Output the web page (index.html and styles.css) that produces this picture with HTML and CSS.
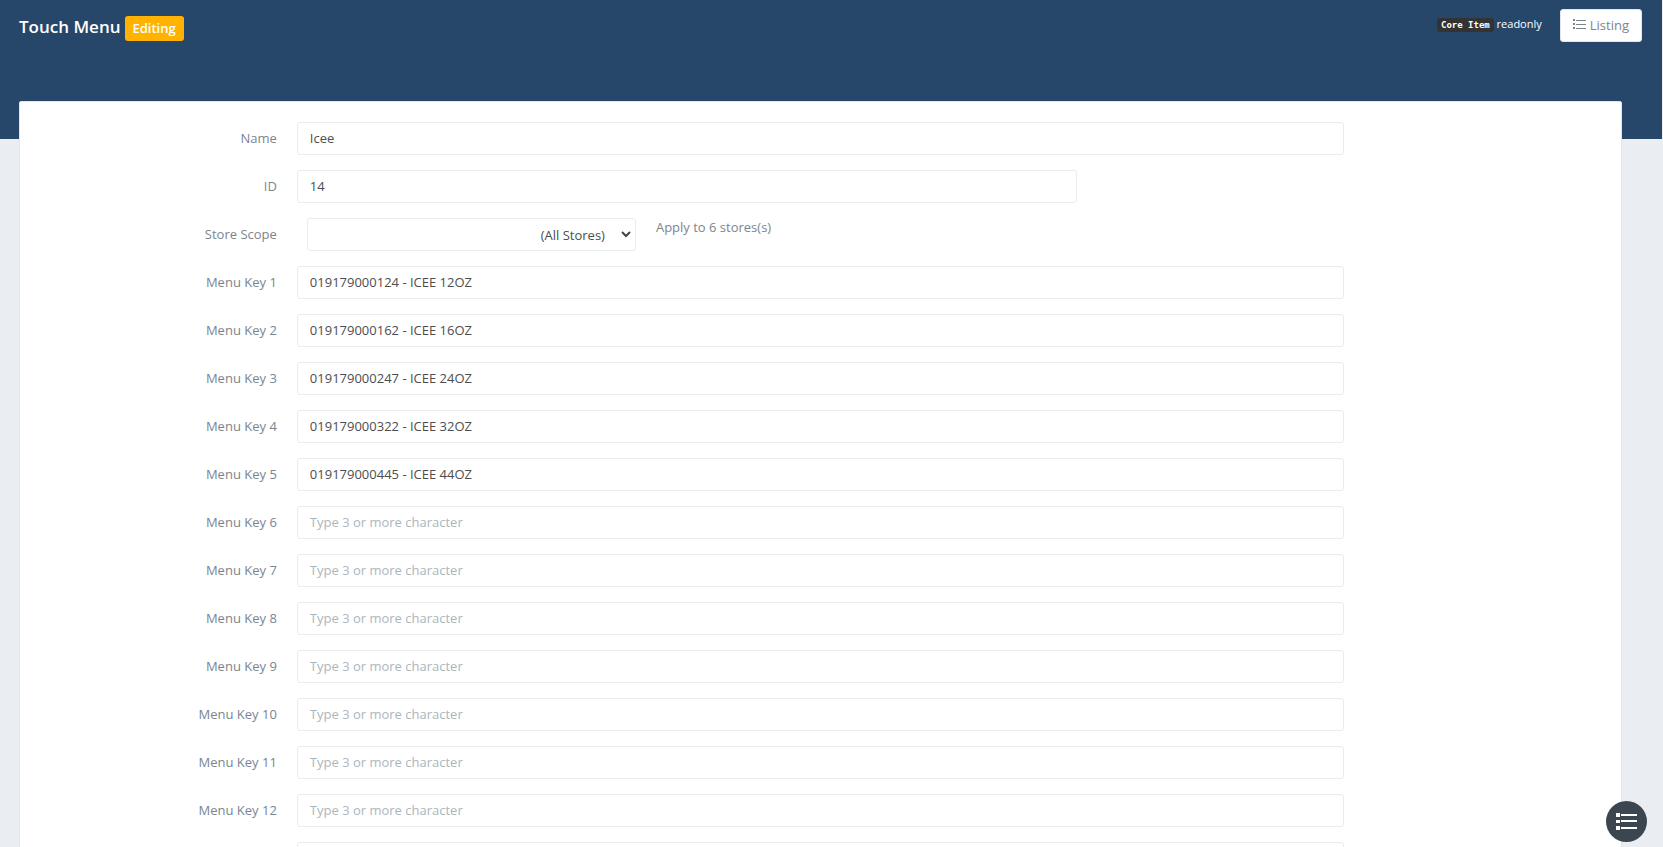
FILE: index.html
```html
<!DOCTYPE html>
<html lang="en">
<head>
<meta charset="utf-8">
<title>Touch Menu</title>
<link rel="stylesheet" href="styles.css">
</head>
<body>
<div class="page">
  <header class="header">
    <h1 class="title">Touch Menu <span class="badge">Editing</span></h1>
    <div class="actions">
      <span class="note"><code class="code">Core Item</code> readonly</span>
      <button type="button" class="btn"><svg class="btn-icon" viewBox="0 0 13 11" aria-hidden="true"><path d="M0 0h2v2H0zM0 4h2v2H0zM0 8h2v2H0zM3 1h10v1H3zM3 5h10v1H3zM3 9h10v1H3z"/></svg>Listing</button>
    </div>
  </header>
  <main class="card">
    <form class="form">
      <div class="row"><label class="label" for="name">Name</label><div class="field"><input class="control" id="name" value="Icee"></div></div>
      <div class="row"><label class="label" for="id">ID</label><div class="field field-short"><input class="control" id="id" value="14"></div></div>
      <div class="row"><label class="label" for="scope">Store Scope</label><div class="field scope"><div class="scope-select"><select class="control select" id="scope"><option>(All Stores)</option></select></div><span class="scope-note">Apply to 6 stores(s)</span></div></div>
      <div class="row"><label class="label" for="k1">Menu Key 1</label><div class="field"><input class="control" id="k1" placeholder="Type 3 or more character" value="019179000124 - ICEE 12OZ"></div></div>
      <div class="row"><label class="label" for="k2">Menu Key 2</label><div class="field"><input class="control" id="k2" placeholder="Type 3 or more character" value="019179000162 - ICEE 16OZ"></div></div>
      <div class="row"><label class="label" for="k3">Menu Key 3</label><div class="field"><input class="control" id="k3" placeholder="Type 3 or more character" value="019179000247 - ICEE 24OZ"></div></div>
      <div class="row"><label class="label" for="k4">Menu Key 4</label><div class="field"><input class="control" id="k4" placeholder="Type 3 or more character" value="019179000322 - ICEE 32OZ"></div></div>
      <div class="row"><label class="label" for="k5">Menu Key 5</label><div class="field"><input class="control" id="k5" placeholder="Type 3 or more character" value="019179000445 - ICEE 44OZ"></div></div>
      <div class="row"><label class="label" for="k6">Menu Key 6</label><div class="field"><input class="control" id="k6" placeholder="Type 3 or more character"></div></div>
      <div class="row"><label class="label" for="k7">Menu Key 7</label><div class="field"><input class="control" id="k7" placeholder="Type 3 or more character"></div></div>
      <div class="row"><label class="label" for="k8">Menu Key 8</label><div class="field"><input class="control" id="k8" placeholder="Type 3 or more character"></div></div>
      <div class="row"><label class="label" for="k9">Menu Key 9</label><div class="field"><input class="control" id="k9" placeholder="Type 3 or more character"></div></div>
      <div class="row"><label class="label" for="k10">Menu Key 10</label><div class="field"><input class="control" id="k10" placeholder="Type 3 or more character"></div></div>
      <div class="row"><label class="label" for="k11">Menu Key 11</label><div class="field"><input class="control" id="k11" placeholder="Type 3 or more character"></div></div>
      <div class="row"><label class="label" for="k12">Menu Key 12</label><div class="field"><input class="control" id="k12" placeholder="Type 3 or more character"></div></div>
      <div class="row"><span class="label"></span><div class="field"><input class="control" aria-label="Next menu key"></div></div>
    </form>
  </main>
</div>
<button type="button" class="fab" aria-label="Quick menu"><svg class="fab-icon" viewBox="0 0 21 17" aria-hidden="true"><path d="M0 0h4v4H0zM0 7h4v3H0zM0 13h4v4H0zM5 1h16v2H5zM5 7h16v2H5zM5 14h16v2H5z"/></svg></button>
</body>
</html>
```
FILE: styles.css
```css
* { box-sizing: border-box; }

html { scrollbar-width: none; }

body {
  margin: 0;
  background: #eaeef3;
  color: #7b858f;
  font: 13px/18px "Open Sans", sans-serif;
}

.page { border-right: 1px solid #eaeef3; }

.header {
  display: flex;
  justify-content: space-between;
  align-items: flex-start;
  min-height: 139px;
  padding: 9px 20px 0 19px;
  background: #26476a;
  color: #fff;
}

.title {
  display: flex;
  align-items: flex-start;
  gap: 4px;
  margin: 7px 0 0;
  font-size: 17px;
  line-height: 21px;
  font-weight: 600;
}

.badge {
  padding: 0 8px;
  border-radius: 3px;
  background: #ffb300;
  font-size: 13px;
  line-height: 25px;
}

.actions {
  display: flex;
  align-items: flex-start;
  gap: 18px;
}

.note {
  padding-top: 6px;
  font-size: 11px;
}

.code {
  padding: 2px 4px;
  border-radius: 3px;
  background: #333;
  font: 700 9px/11px "DejaVu Sans Mono", monospace;
}

.btn {
  display: flex;
  align-items: center;
  gap: 4px;
  height: 33px;
  padding: 0 12px 2px;
  border: 1px solid #e2e5ec;
  border-radius: 3px;
  background: #fff;
  color: #7b858f;
  font: inherit;
}

.btn-icon {
  width: 13px;
  height: 11px;
  fill: currentColor;
}

.card {
  margin: -38px 40px 0 19px;
  padding: 20px 0;
  border: 1px solid #e2e5ec;
  border-radius: 2px;
  background: #fff;
}

.form {
  display: flex;
  flex-direction: column;
  gap: 15px;
}

.row { display: flex; }

.label {
  width: 16.6667%;
  padding: 7px 10px 0;
  text-align: right;
}

.field {
  width: 66.6667%;
  padding: 0 10px;
}

.field-short { width: 50%; }

.control {
  display: block;
  width: 100%;
  height: 33px;
  padding: 0 12px 2px;
  border: 1px solid #ebebeb;
  border-radius: 3px;
  background: #fff;
  color: #4d4d4d;
  font: inherit;
}

.control::placeholder {
  color: #adb5bd;
  opacity: 1;
}

.scope { display: flex; }

.scope-select {
  width: 33.3333%;
  padding: 0 10px;
}

.select {
  padding: 0 0 0 12px;
  appearance: none;
  padding-right: 30px;
  background: #fff url("data:image/svg+xml,%3Csvg xmlns='http://www.w3.org/2000/svg' width='10' height='7'%3E%3Cpath d='M1 1l4 4 4-4' fill='none' stroke='%23444' stroke-width='2'/%3E%3C/svg%3E") no-repeat right 4px center;
  text-align: right;
  text-align-last: right;
}

.scope-note { padding: 0 10px; }

.fab {
  position: fixed;
  right: 16px;
  bottom: 5px;
  display: flex;
  align-items: center;
  justify-content: center;
  width: 41px;
  height: 41px;
  padding: 0;
  border: 0;
  border-radius: 50%;
  background: #3c4650;
}

.fab-icon {
  width: 21px;
  height: 17px;
  fill: #fff;
}
```
